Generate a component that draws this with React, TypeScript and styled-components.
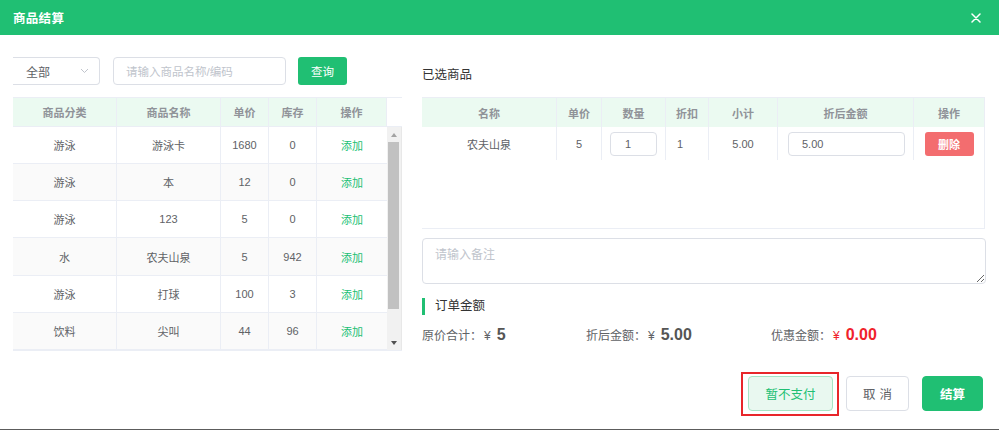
import React from 'react';
import styled, { createGlobalStyle, css } from 'styled-components';

const GREEN = '#20bf73';
const LINE = '#ebeef5';

const GlobalStyle = createGlobalStyle`
  html, body {
    margin: 0;
    padding: 0;
    background: #fff;
  }
  body {
    font-family: "Liberation Sans", "Noto Sans CJK SC", sans-serif;
    color: #606266;
  }
  * {
    box-sizing: border-box;
  }
`;

const Frame = styled.div`
  width: 999px;
  height: 430px;
  display: flex;
  flex-direction: column;
  background: #fff;
  border-bottom: 1px solid #5c5c5c;
`;

const Header = styled.div`
  height: 35px;
  flex: none;
  display: flex;
  align-items: center;
  justify-content: space-between;
  padding: 0 18px 0 13px;
  background: ${GREEN};
`;

const Title = styled.div`
  color: #fff;
  font-size: 12.5px;
  font-weight: bold;
  letter-spacing: 0.3px;
`;

const Close = styled.div`
  width: 10px;
  height: 10px;
  display: flex;
`;

const Body = styled.div`
  display: flex;
  height: 316px;
  padding-left: 13px;
`;

const LeftPanel = styled.div`
  width: 389px;
  padding-top: 22px;
`;

const Toolbar = styled.div`
  display: flex;
  align-items: center;
  height: 28px;
`;

const Select = styled.div`
  width: 87px;
  height: 28px;
  display: flex;
  align-items: center;
  justify-content: space-between;
  padding: 0 10px 0 13px;
  border: 1px solid #dcdfe6;
  border-left: none;
  border-radius: 0 4px 4px 0;
  font-size: 12px;
  color: #606266;
`;

const SearchInput = styled.div`
  width: 173px;
  height: 28px;
  margin-left: 13px;
  display: flex;
  align-items: center;
  padding-left: 12px;
  border: 1px solid #dcdfe6;
  border-radius: 4px;
  font-size: 11.5px;
  color: #c0c4cc;
`;

const QueryButton = styled.div`
  width: 49px;
  height: 28px;
  margin-left: 12px;
  display: flex;
  align-items: center;
  justify-content: center;
  background: ${GREEN};
  border-radius: 3px;
  color: #fff;
  font-size: 11.5px;
`;

const GoodsTable = styled.div`
  margin-top: 12px;
  width: 389px;
  border-bottom: 1px solid ${LINE};
`;

const goodsCols = '104px 104px 48px 48px 70px';

const GoodsHead = styled.div`
  display: grid;
  grid-template-columns: ${goodsCols} 15px;
  height: 30px;
  border-top: 1px solid ${LINE};
`;

const HeadCell = styled.div<{ $blank?: boolean }>`
  display: flex;
  align-items: center;
  justify-content: center;
  background: ${(p) => (p.$blank ? '#fff' : '#ebfaf1')};
  border-right: ${(p) => (p.$blank ? 'none' : `1px solid ${LINE}`)};
  border-bottom: 1px solid ${LINE};
  font-size: 11px;
  font-weight: bold;
  color: #909399;
`;

const GoodsBody = styled.div`
  display: flex;
  height: 223px;
  overflow: hidden;
`;

const GoodsRows = styled.div`
  width: 374px;
  height: 223px;
  overflow: hidden;
`;

const GoodsRow = styled.div<{ $striped: boolean }>`
  display: grid;
  grid-template-columns: ${goodsCols};
  height: calc(223px / 6);
  background: ${(p) => (p.$striped ? '#fafafa' : '#fff')};
  border-bottom: 1px solid ${LINE};
`;

const Cell = styled.div`
  display: flex;
  align-items: center;
  justify-content: center;
  border-right: 1px solid ${LINE};
  font-size: 11px;
  color: #606266;
`;

const AddLink = styled(Cell)`
  color: ${GREEN};
  border-right: none;
`;

const ScrollBar = styled.div`
  width: 15px;
  display: flex;
  flex-direction: column;
  background: #f1f1f1;
  border-right: 1px solid #e8e8e8;
`;

const ScrollArrow = styled.div<{ $down?: boolean }>`
  height: 15px;
  flex: none;
  display: flex;
  align-items: center;
  justify-content: center;
  &::before {
    content: '';
    width: 0;
    height: 0;
    border-left: 3.5px solid transparent;
    border-right: 3.5px solid transparent;
    ${(p) =>
      p.$down
        ? css`border-top: 4px solid #505050;`
        : css`border-bottom: 4px solid #a3a3a3;`}
  }
`;

const Thumb = styled.div`
  height: 167px;
  margin: 0 2px 0 1px;
  background: #c1c1c1;
`;

const Track = styled.div`
  flex: 1;
`;

const RightPanel = styled.div`
  width: 564px;
  margin-left: 20px;
`;

const SectionTitle = styled.div`
  margin: 31px 0 13px;
  height: 18px;
  line-height: 18px;
  font-size: 12.5px;
  color: #333;
`;

const selCols = '135px 45px 64px 43px 69px 136px 70px';

const SelTable = styled.div`
  width: 563px;
  height: 132px;
  border: 1px solid ${LINE};
  border-left: none;
`;

const SelHead = styled.div`
  display: grid;
  grid-template-columns: ${selCols};
  height: 29px;
  background: #ebfaf1;
`;

const SelRow = styled.div`
  display: grid;
  grid-template-columns: ${selCols};
  height: 33px;
`;

const SelCell = styled.div<{ $align?: 'left' | 'center'; $last?: boolean }>`
  display: flex;
  align-items: center;
  justify-content: ${(p) => (p.$align === 'left' ? 'flex-start' : 'center')};
  padding-left: ${(p) => (p.$align === 'left' ? '11px' : '0')};
  border-right: ${(p) => (p.$last ? 'none' : `1px solid ${LINE}`)};
  font-size: 11px;
  color: #606266;
`;

const SelHeadCell = styled(SelCell)`
  font-weight: bold;
  color: #909399;
`;

const CellInput = styled.div<{ $width: number; $pad: number }>`
  width: ${(p) => p.$width}px;
  height: 24px;
  display: flex;
  align-items: center;
  padding-left: ${(p) => p.$pad}px;
  border: 1px solid #dcdfe6;
  border-radius: 4px;
  background: #fff;
  font-size: 11px;
  color: #606266;
`;

const AmountCell = styled(SelCell)`
  padding-left: 10px;
`;

const DeleteButton = styled.div`
  width: 49px;
  height: 24px;
  display: flex;
  align-items: center;
  justify-content: center;
  border-radius: 3px;
  background: #f36d6f;
  color: #fff;
  font-size: 11px;
  font-weight: bold;
`;

const Remark = styled.textarea`
  display: block;
  width: 564px;
  height: 46px;
  margin-top: 9px;
  padding: 6px 12px;
  border: 1px solid #dcdfe6;
  border-radius: 4px;
  font-family: "Liberation Sans", "Noto Sans CJK SC", sans-serif;
  font-size: 12px;
  color: #606266;
  outline: none;
  &::placeholder {
    color: #c0c4cc;
  }
`;

const OrderTitle = styled.div`
  margin-top: 14px;
  height: 17px;
  line-height: 17px;
  padding-left: 10px;
  border-left: 3px solid ${GREEN};
  font-size: 12.5px;
  color: #333;
`;

const Summary = styled.div`
  display: flex;
  align-items: baseline;
  margin-top: 11px;
  height: 20px;
`;

const SumItem = styled.div<{ $width?: number }>`
  width: ${(p) => (p.$width ? `${p.$width}px` : 'auto')};
  display: flex;
  align-items: baseline;
  font-size: 12px;
  color: #606266;
`;

const Yen = styled.span<{ $red?: boolean }>`
  margin: 0 6px 0 2px;
  font-size: 12px;
  color: ${(p) => (p.$red ? '#f0222b' : '#606266')};
`;

const Amount = styled.span<{ $red?: boolean }>`
  font-size: 16px;
  font-weight: bold;
  color: ${(p) => (p.$red ? '#f0222b' : '#555')};
`;

const Footer = styled.div`
  display: flex;
  justify-content: flex-end;
  gap: 13px;
  padding: 25px 16px 0 0;
`;

const Marked = styled.div`
  position: relative;
  &::after {
    content: '';
    position: absolute;
    top: -4px;
    right: -6px;
    bottom: -5px;
    left: -7px;
    border: 2px solid #e8262b;
    pointer-events: none;
  }
`;

type Variant = 'light' | 'plain' | 'primary';

const variants = {
  light: css`
    background: #e9f8f0;
    border: 1px solid #a6e4c5;
    color: ${GREEN};
  `,
  plain: css`
    background: #fff;
    border: 1px solid #dcdfe6;
    color: #606266;
    letter-spacing: 4px;
    text-indent: 4px;
  `,
  primary: css`
    background: ${GREEN};
    border: 1px solid ${GREEN};
    color: #fff;
    font-weight: bold;
  `,
};

const Button = styled.div<{ $variant: Variant; $width: number }>`
  width: ${(p) => p.$width}px;
  height: 35px;
  display: flex;
  align-items: center;
  justify-content: center;
  border-radius: 4px;
  font-size: 12.5px;
  ${(p) => variants[p.$variant]}
`;

const goods = [
  { type: '游泳', name: '游泳卡', price: '1680', stock: '0' },
  { type: '游泳', name: '本', price: '12', stock: '0' },
  { type: '游泳', name: '123', price: '5', stock: '0' },
  { type: '水', name: '农夫山泉', price: '5', stock: '942' },
  { type: '游泳', name: '打球', price: '100', stock: '3' },
  { type: '饮料', name: '尖叫', price: '44', stock: '96' },
];

const CloseIcon = () => (
  <svg width="10" height="10" viewBox="0 0 10 10">
    <path d="M1 1 L9 9 M9 1 L1 9" stroke="#fff" strokeWidth="1.5" strokeLinecap="round" />
  </svg>
);

const Chevron = () => (
  <svg width="9" height="6" viewBox="0 0 9 6">
    <path d="M1 1 L4.5 4.5 L8 1" stroke="#c0c4cc" strokeWidth="1" fill="none" />
  </svg>
);

const App: React.FC = () => (
  <Frame>
    <GlobalStyle />
    <Header>
      <Title>商品结算</Title>
      <Close>
        <CloseIcon />
      </Close>
    </Header>
    <Body>
      <LeftPanel>
        <Toolbar>
          <Select>
            <span>全部</span>
            <Chevron />
          </Select>
          <SearchInput>请输入商品名称/编码</SearchInput>
          <QueryButton>查询</QueryButton>
        </Toolbar>
        <GoodsTable>
          <GoodsHead>
            <HeadCell>商品分类</HeadCell>
            <HeadCell>商品名称</HeadCell>
            <HeadCell>单价</HeadCell>
            <HeadCell>库存</HeadCell>
            <HeadCell>操作</HeadCell>
            <HeadCell $blank />
          </GoodsHead>
          <GoodsBody>
            <GoodsRows>
              {goods.map((g, i) => (
                <GoodsRow key={i} $striped={i % 2 === 1}>
                  <Cell>{g.type}</Cell>
                  <Cell>{g.name}</Cell>
                  <Cell>{g.price}</Cell>
                  <Cell>{g.stock}</Cell>
                  <AddLink>添加</AddLink>
                </GoodsRow>
              ))}
            </GoodsRows>
            <ScrollBar>
              <ScrollArrow />
              <Thumb />
              <Track />
              <ScrollArrow $down />
            </ScrollBar>
          </GoodsBody>
        </GoodsTable>
      </LeftPanel>
      <RightPanel>
        <SectionTitle>已选商品</SectionTitle>
        <SelTable>
          <SelHead>
            <SelHeadCell>名称</SelHeadCell>
            <SelHeadCell>单价</SelHeadCell>
            <SelHeadCell>数量</SelHeadCell>
            <SelHeadCell>折扣</SelHeadCell>
            <SelHeadCell>小计</SelHeadCell>
            <SelHeadCell>折后金额</SelHeadCell>
            <SelHeadCell $last>操作</SelHeadCell>
          </SelHead>
          <SelRow>
            <SelCell>农夫山泉</SelCell>
            <SelCell>5</SelCell>
            <SelCell>
              <CellInput $width={47} $pad={14}>1</CellInput>
            </SelCell>
            <SelCell $align="left">1</SelCell>
            <SelCell>5.00</SelCell>
            <AmountCell $align="left">
              <CellInput $width={117} $pad={13}>5.00</CellInput>
            </AmountCell>
            <SelCell $last>
              <DeleteButton>删除</DeleteButton>
            </SelCell>
          </SelRow>
        </SelTable>
        <Remark placeholder="请输入备注" />
        <OrderTitle>订单金额</OrderTitle>
        <Summary>
          <SumItem $width={164}>
            原价合计：<Yen>¥</Yen>
            <Amount>5</Amount>
          </SumItem>
          <SumItem $width={185}>
            折后金额：<Yen>¥</Yen>
            <Amount>5.00</Amount>
          </SumItem>
          <SumItem>
            优惠金额：<Yen $red>¥</Yen>
            <Amount $red>0.00</Amount>
          </SumItem>
        </Summary>
      </RightPanel>
    </Body>
    <Footer>
      <Marked>
        <Button $variant="light" $width={85}>
          暂不支付
        </Button>
      </Marked>
      <Button $variant="plain" $width={63}>
        取消
      </Button>
      <Button $variant="primary" $width={61}>
        结算
      </Button>
    </Footer>
  </Frame>
);

export default App;
